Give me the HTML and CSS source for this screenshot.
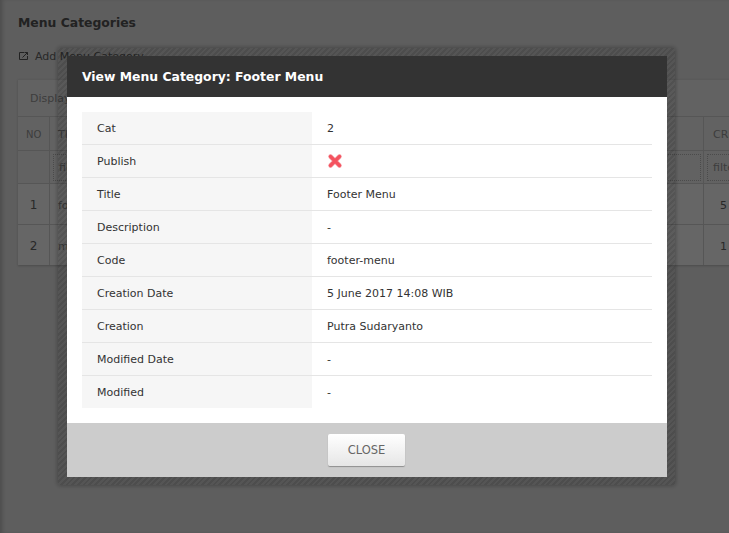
FILE: index.html
```html
<!DOCTYPE html>
<html lang="en">
<head>
    <meta charset="UTF-8">
    <meta name="viewport" content="width=device-width, initial-scale=1.0">
    <title>Menu Categories</title>
    <link rel="stylesheet" href="styles.css">
</head>
<body>
    <div id="page">
        <h1>Menu Categories</h1>
        <a class="add-link" href="#">
            <svg class="add-icon" width="10" height="10" viewBox="0 0 10 10"><path d="M8.5 5V8.5H0.5V1.5H5.5M3.5 6.5L8.5 1.5M6 1.5H8.5V4" fill="none" stroke="#555" stroke-width="1"/></svg>
            Add Menu Category
        </a>
        <div class="panel">
            <div class="panel-top">Display 10 records</div>
            <table class="list">
                <tr class="list-head">
                    <th class="col-no">NO</th>
                    <th>TITLE</th>
                    <th>CODE</th>
                    <th class="col-cr">CREATION</th>
                </tr>
                <tr class="list-filter">
                    <td></td>
                    <td><span class="filter">filter</span></td>
                    <td><span class="filter">filter</span></td>
                    <td><span class="filter">filter</span></td>
                </tr>
                <tr class="list-row">
                    <td class="col-no">1</td>
                    <td>footer-menu</td>
                    <td>Footer Menu</td>
                    <td>5 June</td>
                </tr>
                <tr class="list-row">
                    <td class="col-no">2</td>
                    <td>main-menu</td>
                    <td>Main Menu</td>
                    <td>1 June</td>
                </tr>
            </table>
        </div>
    </div>

    <div id="overlay"></div>

    <div id="modal">
        <div class="modal-box">
            <div class="modal-head">View Menu Category: Footer Menu</div>
            <div class="modal-body">
                <table class="detail">
                    <tr><th>Cat</th><td>2</td></tr>
                    <tr>
                        <th>Publish</th>
                        <td>
                            <svg class="cross" width="16" height="16" viewBox="0 0 16 16"><path d="M3.5 3.5L12.5 12.5M12.5 3.5L3.5 12.5" stroke="#f6b0b6" stroke-width="4.6" stroke-linecap="round"/><path d="M3.5 3.5L12.5 12.5M12.5 3.5L3.5 12.5" stroke="#f4525f" stroke-width="3.4" stroke-linecap="round"/></svg>
                        </td>
                    </tr>
                    <tr><th>Title</th><td>Footer Menu</td></tr>
                    <tr><th>Description</th><td>-</td></tr>
                    <tr><th>Code</th><td>footer-menu</td></tr>
                    <tr><th>Creation Date</th><td>5 June 2017 14:08 WIB</td></tr>
                    <tr><th>Creation</th><td>Putra Sudaryanto</td></tr>
                    <tr><th>Modified Date</th><td>-</td></tr>
                    <tr><th>Modified</th><td>-</td></tr>
                </table>
            </div>
            <div class="modal-foot">
                <button class="close-btn" type="button">CLOSE</button>
            </div>
        </div>
    </div>
</body>
</html>
```

FILE: styles.css
```css
html, body {
    margin: 0;
    height: 100%;
    overflow: hidden;
}

body {
    font-family: "DejaVu Sans", Tahoma, sans-serif;
    font-size: 11px;
    color: #666;
    background: #eaeaea;
    box-shadow: inset 4px 0 4px -2px rgba(0, 0, 0, 0.2);
}

#page {
    width: 780px;
    padding: 15px 0 0 18px;
}

h1 {
    margin: 0 0 18px;
    font-size: 12.4px;
    line-height: 16px;
    font-weight: bold;
    color: #555;
}

.add-link {
    display: flex;
    align-items: center;
    gap: 6px;
    height: 14px;
    color: #666;
    text-decoration: none;
}

.add-icon {
    margin-left: 1px;
}

.panel {
    margin-top: 16px;
    border-top: 1px solid #e0e0e0;
    background: #f6f6f6;
    box-shadow: 0 1px 2px rgba(0, 0, 0, 0.2);
}

.panel-top {
    height: 36px;
    line-height: 38px;
    padding-left: 12px;
    color: #999;
}

.list {
    width: 100%;
    border-collapse: collapse;
    table-layout: fixed;
}

.list th,
.list td {
    border: 1px solid #d8d8d8;
    border-left: none;
    padding: 0 8px;
    text-align: left;
    font-weight: normal;
}

.list tr:last-child td {
    border-bottom: none;
}

.list-head th {
    height: 32px;
    padding-top: 1px;
    color: #999;
}

.list-head th:last-child {
    padding-left: 9px;
}

.list .list-filter td {
    height: 32px;
    padding: 0 2px;
}

.list .list-row td {
    height: 38px;
    padding-top: 2px;
    background: #fff;
    color: #999;
}

.list .list-row td:last-child {
    padding-left: 16px;
    color: #666;
}

.col-no {
    width: 15px;
    font-size: 10px;
}

.list .list-row .col-no {
    font-size: 12px;
    text-align: center;
    color: #666;
}

.col-cr {
    width: 76px;
}

.filter {
    display: block;
    border: 1px dotted #bbb;
    padding: 6px 5px;
    color: #999;
    margin-left: 1px;
}

#overlay {
    position: fixed;
    inset: 0;
    background: rgba(0, 0, 0, 0.6);
}

#modal {
    position: fixed;
    left: 58px;
    top: 48px;
    width: 600px;
    padding: 8px 8px 8px 9px;
    background: repeating-linear-gradient(135deg, rgba(0, 0, 0, 0.1) 0, rgba(0, 0, 0, 0.1) 2px, rgba(0, 0, 0, 0.18) 2px, rgba(0, 0, 0, 0.18) 4px);
    box-shadow: 0 0 5px rgba(0, 0, 0, 0.35);
}

.modal-box {
    background: #fff;
}

.modal-head {
    height: 41px;
    line-height: 41px;
    padding-left: 15px;
    background: #333;
    color: #fff;
    font-size: 12.4px;
    font-weight: bold;
}

.modal-body {
    padding: 15px;
}

.detail {
    width: 100%;
    border-collapse: collapse;
    table-layout: fixed;
}

.detail th,
.detail td {
    height: 32px;
    padding: 0 15px;
    border-bottom: 1px solid #e5e5e5;
    text-align: left;
    font-weight: normal;
    color: #333;
}

.detail tr:last-child th,
.detail tr:last-child td {
    border-bottom: none;
}

.detail th {
    width: 200px;
    background: #f6f6f6;
}

.cross {
    display: block;
}

.modal-foot {
    display: flex;
    justify-content: center;
    align-items: flex-start;
    height: 43px;
    padding-top: 11px;
    background: #ccc;
}

.close-btn {
    width: 77px;
    height: 32px;
    margin-right: 1px;
    border: none;
    border-radius: 2px;
    background: linear-gradient(#fff, #e6e6e6);
    box-shadow: 0 1px 1px rgba(0, 0, 0, 0.3);
    font-family: inherit;
    font-size: 11.5px;
    color: #666;
    cursor: pointer;
}
```
